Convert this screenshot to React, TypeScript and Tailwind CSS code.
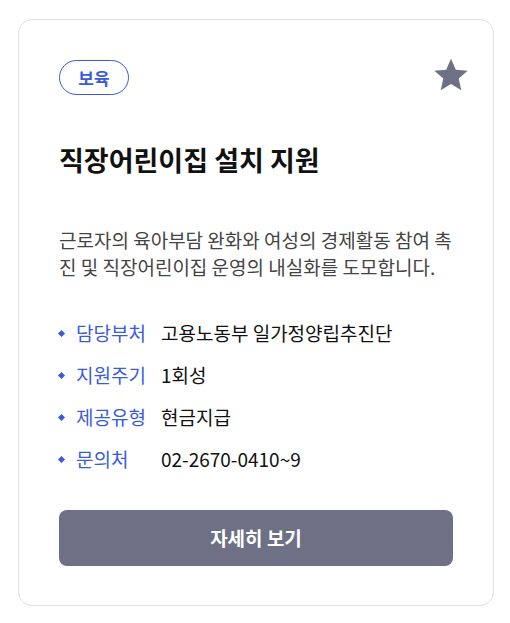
const info = [
  { label: '담당부처', value: '고용노동부 일가정양립추진단' },
  { label: '지원주기', value: '1회성' },
  { label: '제공유형', value: '현금지급' },
  { label: '문의처', value: '02-2670-0410~9' },
];

export default function App() {
  return (
    <div className="min-h-screen bg-white pl-[18px] pt-[19px] font-['Noto_Sans_CJK_KR',sans-serif]">
      <div className="w-[476px] rounded-[14px] border border-[#e0e0e0] bg-white px-10 pt-10 pb-[39px]">
        {/* header */}
        <div className="flex items-start justify-between">
          <span className="flex h-[35px] w-[70px] items-center justify-center rounded-full border border-[#3b5bdb] text-[17px] font-bold text-[#3b5bdb]">
            보육
          </span>
          <button className="-mr-[18px] -mt-[5px]" aria-label="즐겨찾기">
            <svg width="40" height="40" viewBox="0 0 24 24" fill="#6e7086">
              <path d="M12 2.2l2.9 6.6 7.1.6-5.4 4.7 1.6 7-6.2-3.7-6.2 3.7 1.6-7L2 9.4l7.1-.6z" />
            </svg>
          </button>
        </div>

        {/* title */}
        <h2 className="mt-[49px] text-[27px] leading-[32px] font-bold text-[#111]">
          직장어린이집 설치 지원
        </h2>

        {/* description */}
        <p className="mt-[50px] break-all text-[19px] leading-[27px] text-[#444]">
          근로자의 육아부담 완화와 여성의 경제활동 참여 촉진 및 직장어린이집 운영의 내실화를 도모합니다.
        </p>

        {/* info list */}
        <ul className="mt-[40px] flex flex-col gap-4">
          {info.map((row) => (
            <li key={row.label} className="flex items-center text-[19px] leading-[26px]">
              <span className="mr-[12px] h-[5px] w-[5px] rotate-45 bg-[#3b5bdb]" />
              <span className="w-[85px] shrink-0 text-[#3b5bdb]">{row.label}</span>
              <span className="text-[#111]">{row.value}</span>
            </li>
          ))}
        </ul>

        {/* action */}
        <button className="mt-[38px] flex h-14 w-full items-center justify-center rounded-lg bg-[#6e7086] text-[19px] font-bold text-white">
          자세히 보기
        </button>
      </div>
    </div>
  );
}
